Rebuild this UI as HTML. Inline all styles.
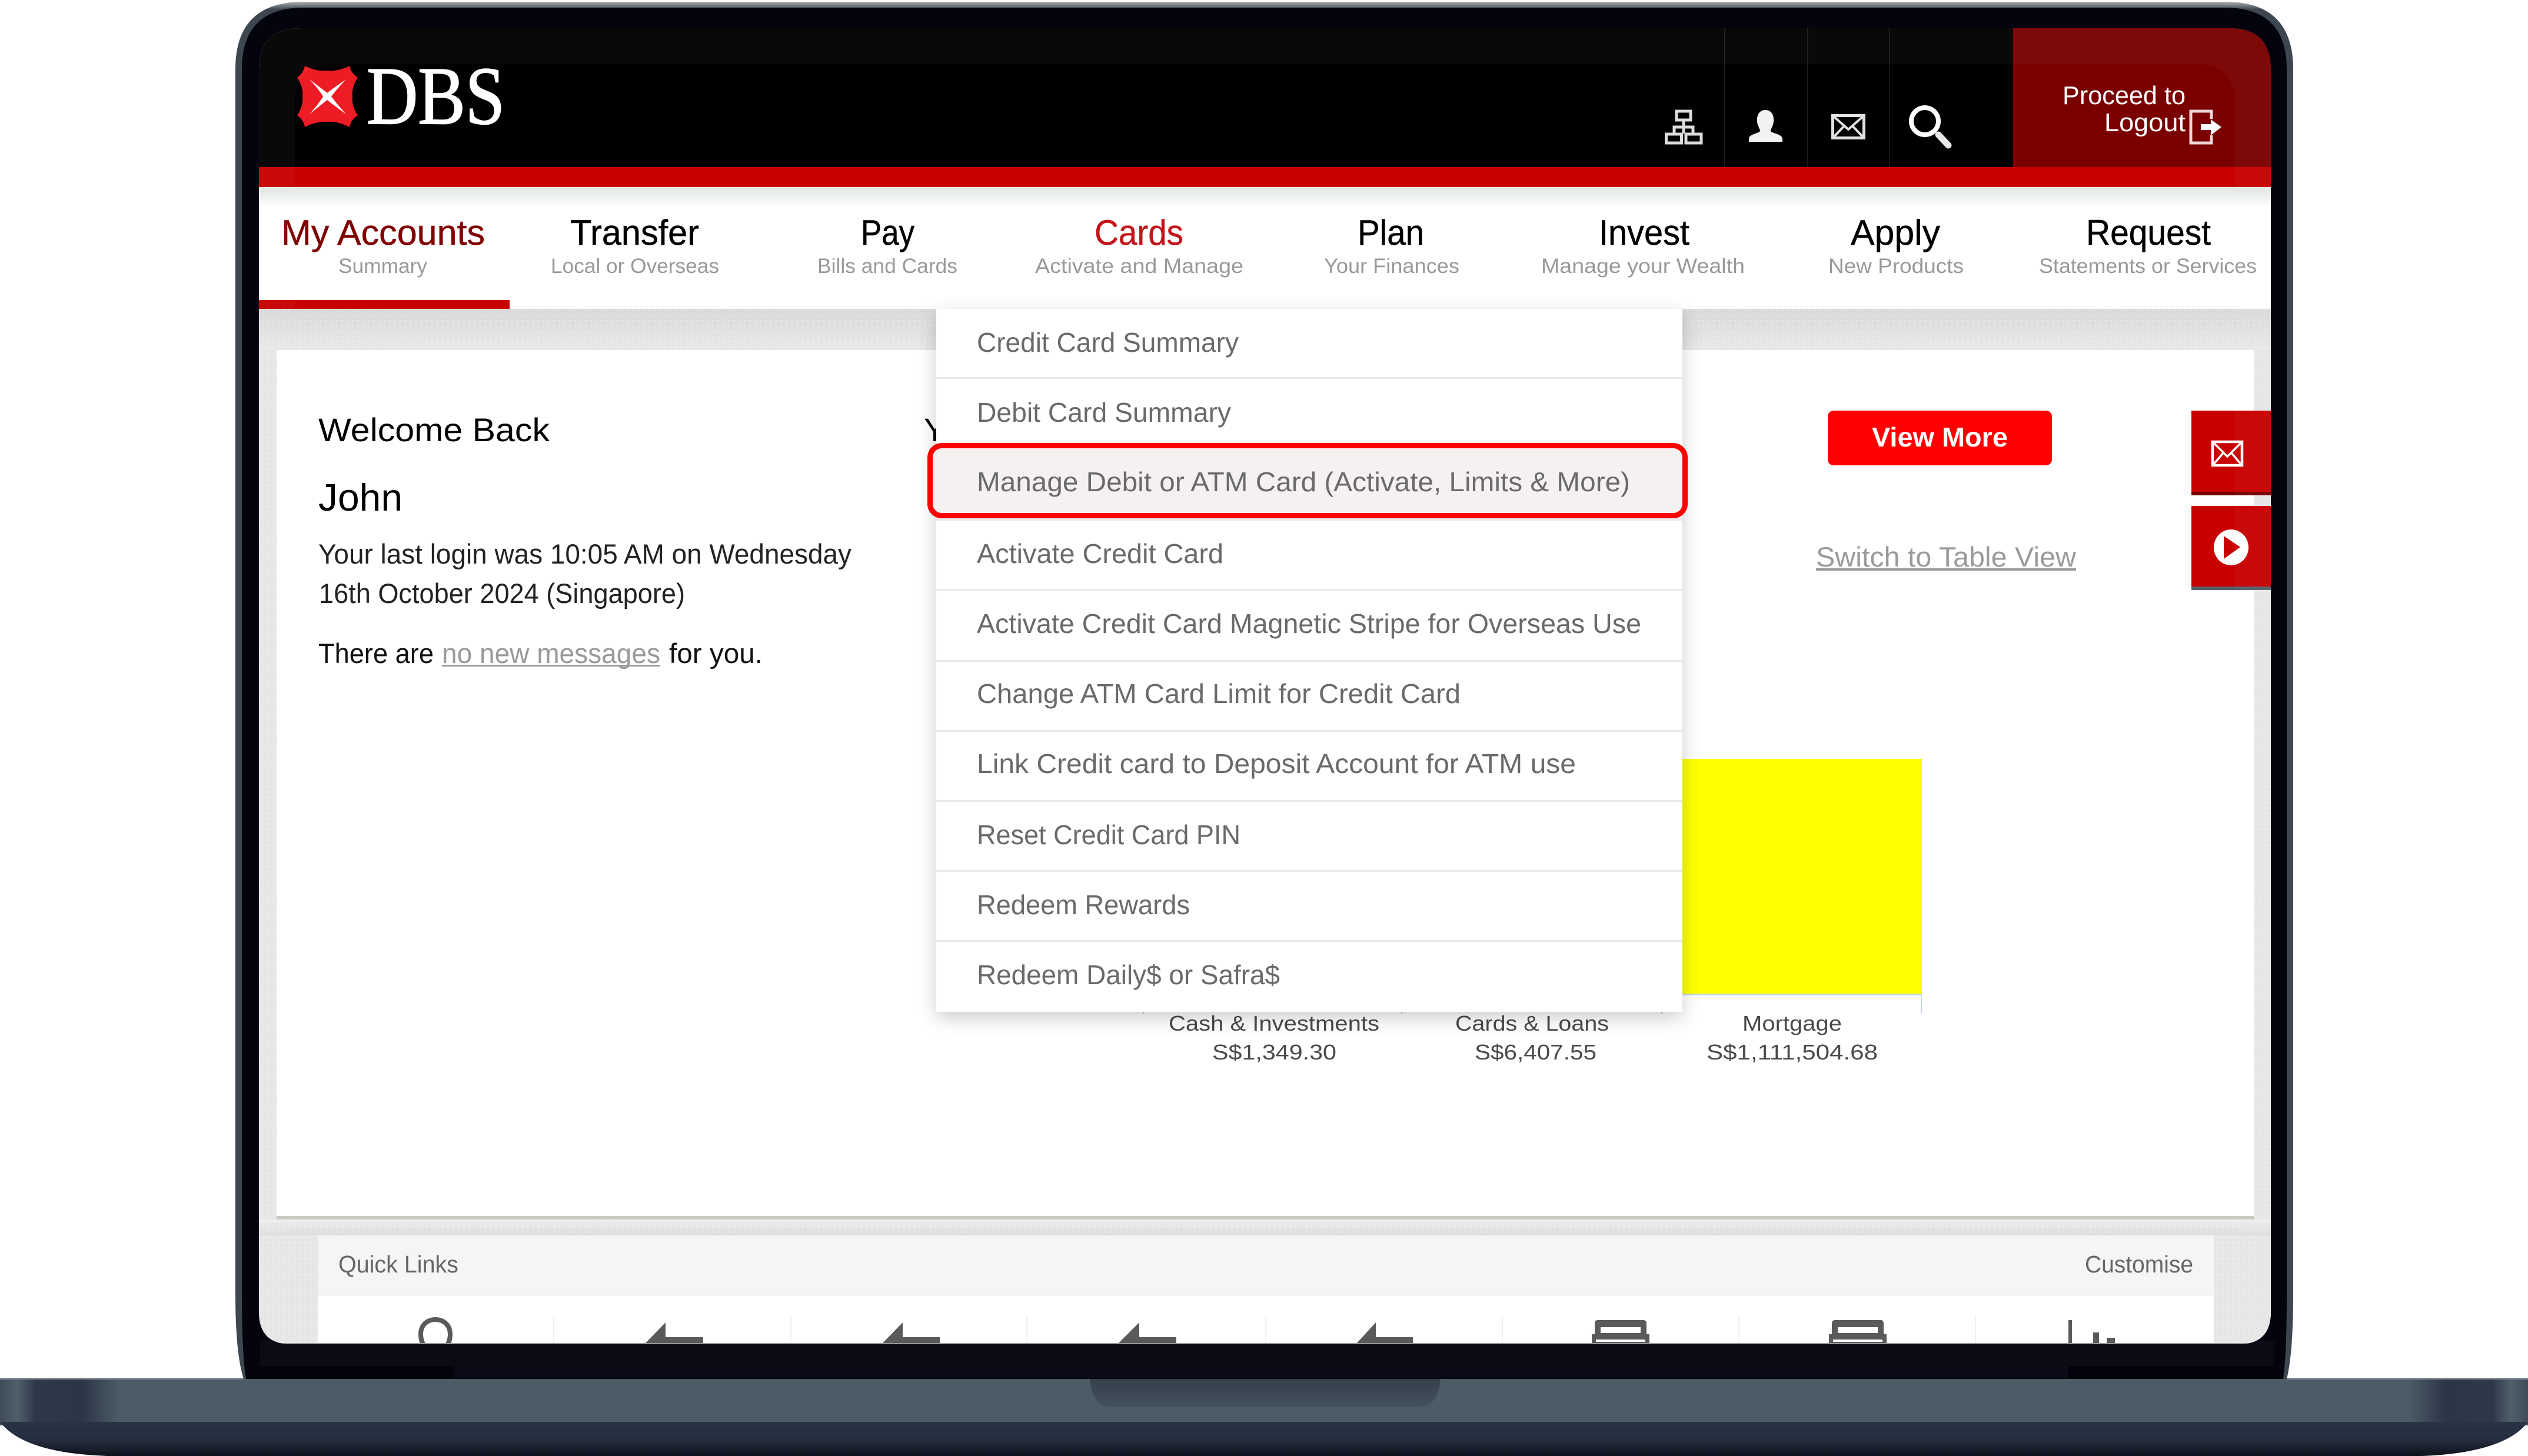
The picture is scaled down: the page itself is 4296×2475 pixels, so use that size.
<!DOCTYPE html>
<html lang="en">
<head>
<meta charset="utf-8">
<title>DBS digibank - Cards menu</title>
<style>
html,body{margin:0;padding:0;background:#fff;width:4296px;height:2475px;overflow:hidden}
svg{display:block}
text{font-family:"Liberation Sans",sans-serif}
.t{font-size:60px;fill:#000;stroke:currentColor;stroke-width:.5px}
.s{font-size:35px;fill:#999}
.d{font-size:46px;fill:#6a6a6a}
.b{font-size:47px;fill:#222}
.c{font-size:36px;fill:#4a4a4a}
</style>
</head>
<body>
<svg xmlns="http://www.w3.org/2000/svg" width="4296" height="2475" viewBox="0 0 4296 2475">
<defs>
<linearGradient id="edge" gradientUnits="userSpaceOnUse" x1="0" y1="2" x2="0" y2="16">
<stop offset="0" stop-color="#b5b8ba"/><stop offset="1" stop-color="#3e474f"/>
</linearGradient>
<linearGradient id="baseT" gradientUnits="userSpaceOnUse" x1="0" y1="0" x2="4296" y2="0">
<stop offset="0" stop-color="#3f4c58"/><stop offset=".007" stop-color="#4f5e6a"/>
<stop offset=".014" stop-color="#2e3849"/><stop offset=".033" stop-color="#2c3648"/>
<stop offset=".047" stop-color="#4c5b66"/><stop offset=".953" stop-color="#4c5b66"/>
<stop offset=".967" stop-color="#2c3648"/><stop offset=".986" stop-color="#2e3849"/>
<stop offset=".993" stop-color="#4f5e6a"/><stop offset="1" stop-color="#3f4c58"/>
</linearGradient>
<linearGradient id="baseB" gradientUnits="userSpaceOnUse" x1="0" y1="2423" x2="0" y2="2475">
<stop offset="0" stop-color="#2a3345"/><stop offset=".5" stop-color="#242c3d"/><stop offset="1" stop-color="#0e111d"/>
</linearGradient>
<linearGradient id="notch" gradientUnits="userSpaceOnUse" x1="0" y1="2343" x2="0" y2="2392">
<stop offset="0" stop-color="#333f4b"/><stop offset="1" stop-color="#44525d"/>
</linearGradient>
<linearGradient id="navsh" gradientUnits="userSpaceOnUse" x1="0" y1="318" x2="0" y2="352">
<stop offset="0" stop-color="#dfe4e2"/><stop offset="1" stop-color="#fff"/>
</linearGradient>
<linearGradient id="grayTop" gradientUnits="userSpaceOnUse" x1="0" y1="525" x2="0" y2="595">
<stop offset="0" stop-color="#d8d8d8"/><stop offset="1" stop-color="#e9e9e9"/>
</linearGradient>
<linearGradient id="grayMid" gradientUnits="userSpaceOnUse" x1="0" y1="2073" x2="0" y2="2100">
<stop offset="0" stop-color="#efefef"/><stop offset="1" stop-color="#dcdcdc"/>
</linearGradient>
<pattern id="dots" width="9" height="9" patternUnits="userSpaceOnUse">
<rect x="0" y="0" width="3" height="3" fill="#dcdcdc" opacity=".35"/>
<rect x="4" y="4" width="3" height="3" fill="#f4f4f4" opacity=".35"/>
</pattern>
<clipPath id="screen">
<path d="M440 118 Q440 48 510 48 H3789 Q3859 48 3859 118 V2230 Q3859 2285 3804 2285 H495 Q440 2285 440 2230 Z"/>
</clipPath>
<filter id="blur" x="-10%" y="-10%" width="120%" height="120%"><feGaussianBlur stdDeviation="16"/></filter>
</defs>

<!-- laptop base -->
<path d="M0 2343 H4296 V2423 H0 Z" fill="url(#baseT)"/>
<path d="M0 2417 H4296 Q4256 2470 4114 2475 H182 Q40 2470 0 2417 Z" fill="url(#baseB)"/>
<path d="M1852 2343 H2448 Q2444 2392 2412 2392 H1888 Q1856 2392 1852 2343 Z" fill="url(#notch)"/>
<rect x="0" y="2342" width="414" height="3" fill="#7d8891"/>
<rect x="3886" y="2342" width="410" height="3" fill="#7d8891"/>

<!-- lid -->
<path d="M414 2344 Q400 2300 400 2200 V118 Q400 3 515 3 H3782 Q3897 3 3897 118 V2200 Q3897 2300 3886 2344 Z" fill="url(#edge)"/>
<path d="M418 2344 Q411 2300 411 2200 V118 Q411 13 516 13 H3781 Q3886 13 3886 118 V2200 Q3886 2300 3880 2344 Z" fill="#03040e"/>
<rect x="442" y="2280" width="3423" height="42" fill="#0a0b15"/>
<rect x="772" y="2322" width="2742" height="21" fill="#0b0c18"/>

<!-- screen -->
<g clip-path="url(#screen)">
<rect x="440" y="48" width="3420" height="2240" fill="#fff"/>

<!-- header -->
<rect x="440" y="48" width="3420" height="236" fill="#000"/>
<rect x="3421" y="48" width="439" height="236" fill="#7a0000"/>
<rect x="440" y="284" width="3420" height="34" fill="#c80000"/>
<rect x="2930" y="48" width="1.5" height="236" fill="#1c1c1c"/>
<rect x="3071" y="48" width="1.5" height="236" fill="#1c1c1c"/>
<rect x="3210" y="48" width="1.5" height="236" fill="#1c1c1c"/>

<!-- logo -->
<path d="M518 112 Q538 122 556 120 Q574 122 594 112 Q596 124 608 132 Q597 148 599 164 Q597 180 608 196 Q596 204 594 216 Q574 206 556 207 Q538 206 518 216 Q516 204 505 196 Q516 180 514 164 Q516 148 505 132 Q516 124 518 112 Z" fill="#ed1c24"/>
<path d="M526 135 Q546 150 556 158 Q566 150 588 135 Q572 152 563 164 Q572 176 588 194 Q566 178 556 170 Q546 178 526 194 Q542 176 549 164 Q542 152 526 135 Z" fill="#fff"/>
<text x="623" y="210" font-size="140" textLength="235" lengthAdjust="spacingAndGlyphs" fill="#fff" stroke="#fff" stroke-width="2" style="font-family:'Liberation Serif',serif">DBS</text>

<!-- header icons -->
<g fill="none" stroke="#dcdcdc" stroke-width="5">
<rect x="2849" y="189" width="24" height="15"/>
<path d="M2861 204 V227 M2845 227 V216 H2877 V227"/>
<rect x="2831.500" y="228" width="26" height="15"/>
<rect x="2865" y="228" width="26" height="15"/>
</g>
<path d="M3000 187 C3011 187 3015 197 3014 207 C3013 215 3009 219 3009 223 C3012 227 3029 228 3029 236 V241 H2972 V236 C2972 228 2988 227 2991 223 C2991 219 2987 215 2986 207 C2985 197 2989 187 3000 187 Z" fill="#f2f2f2"/>
<g fill="none" stroke="#e2e2e2" stroke-width="5">
<rect x="3114.500" y="196.500" width="53" height="38"/>
<path d="M3115 197 L3141 220 L3167 197 M3115 234 L3134 214 M3167 234 L3148 214" stroke-width="4"/>
</g>
<circle cx="3271" cy="206" r="23" fill="none" stroke="#fff" stroke-width="8"/>
<path d="M3294 229 L3311 247" stroke="#e8e8e8" stroke-width="11" stroke-linecap="round" fill="none"/>

<text x="3505" y="177" font-size="44" textLength="209" lengthAdjust="spacingAndGlyphs" fill="#fff">Proceed to</text>
<text x="3576" y="223" font-size="44" textLength="138" lengthAdjust="spacingAndGlyphs" fill="#fff">Logout</text>
<path d="M3758 202 V189 H3723 V243 H3758 V230" fill="none" stroke="#ecd6d6" stroke-width="5"/>
<path d="M3740 211 H3757 V203 L3775 216 L3757 230 V221 H3740 Z" fill="#fff"/>

<!-- nav -->
<rect x="440" y="318" width="3420" height="34" fill="url(#navsh)"/>
<text class="t" x="478" y="416" textLength="346" lengthAdjust="spacingAndGlyphs" style="fill:#800000;color:#800000">My Accounts</text>
<text class="t" x="969" y="416" textLength="219" lengthAdjust="spacingAndGlyphs">Transfer</text>
<text class="t" x="1463" y="416" textLength="91" lengthAdjust="spacingAndGlyphs">Pay</text>
<text class="t" x="1860" y="416" textLength="151" lengthAdjust="spacingAndGlyphs" style="fill:#c4151c;color:#c4151c">Cards</text>
<text class="t" x="2307" y="416" textLength="113" lengthAdjust="spacingAndGlyphs">Plan</text>
<text class="t" x="2717" y="416" textLength="154" lengthAdjust="spacingAndGlyphs">Invest</text>
<text class="t" x="3145" y="416" textLength="152" lengthAdjust="spacingAndGlyphs">Apply</text>
<text class="t" x="3545" y="416" textLength="212" lengthAdjust="spacingAndGlyphs">Request</text>
<text class="s" x="575" y="464" textLength="151" lengthAdjust="spacingAndGlyphs">Summary</text>
<text class="s" x="936" y="464" textLength="286" lengthAdjust="spacingAndGlyphs">Local or Overseas</text>
<text class="s" x="1389" y="464" textLength="238" lengthAdjust="spacingAndGlyphs">Bills and Cards</text>
<text class="s" x="1759" y="464" textLength="354" lengthAdjust="spacingAndGlyphs">Activate and Manage</text>
<text class="s" x="2250" y="464" textLength="230" lengthAdjust="spacingAndGlyphs">Your Finances</text>
<text class="s" x="2619" y="464" textLength="346" lengthAdjust="spacingAndGlyphs">Manage your Wealth</text>
<text class="s" x="3107" y="464" textLength="230" lengthAdjust="spacingAndGlyphs">New Products</text>
<text class="s" x="3465" y="464" textLength="370" lengthAdjust="spacingAndGlyphs">Statements or Services</text>
<rect x="440" y="510" width="426" height="15" fill="#c80000"/>

<!-- gray page background -->
<rect x="440" y="525" width="3420" height="1760" fill="#e7e7e7"/>
<rect x="440" y="525" width="3420" height="70" fill="url(#grayTop)"/>
<rect x="440" y="2073" width="3420" height="27" fill="url(#grayMid)"/>
<rect x="440" y="525" width="3420" height="1760" fill="url(#dots)"/>

<!-- main card -->
<rect x="470" y="595" width="3360" height="1472" fill="#fff"/>
<rect x="470" y="2067" width="3360" height="6" fill="#cdcac3"/>

<text x="541" y="750" font-size="56" textLength="393" lengthAdjust="spacingAndGlyphs" fill="#000">Welcome Back</text>
<text x="541" y="868" font-size="65" textLength="143" lengthAdjust="spacingAndGlyphs" fill="#000">John</text>
<text class="b" x="541" y="958" textLength="906" lengthAdjust="spacingAndGlyphs">Your last login was 10:05 AM on Wednesday</text>
<text class="b" x="542" y="1025" textLength="622" lengthAdjust="spacingAndGlyphs">16th October 2024 (Singapore)</text>
<text class="b" x="541" y="1127" textLength="196" lengthAdjust="spacingAndGlyphs" style="fill:#111">There are</text>
<text class="b" x="751" y="1127" textLength="371" lengthAdjust="spacingAndGlyphs" style="fill:#9a9a9a">no new messages</text>
<rect x="751" y="1130" width="371" height="3" fill="#9a9a9a"/>
<text class="b" x="1137" y="1127" textLength="159" lengthAdjust="spacingAndGlyphs" style="fill:#111">for you.</text>
<text x="1570" y="750" font-size="56" fill="#000">Your</text>

<!-- view more -->
<rect x="3106" y="698" width="381" height="93" rx="10" fill="#f00"/>
<text x="3181" y="759" font-size="46" font-weight="700" textLength="231" lengthAdjust="spacingAndGlyphs" fill="#fff">View More</text>
<text x="3086" y="963" font-size="47" textLength="442" lengthAdjust="spacingAndGlyphs" fill="#9a9a9a">Switch to Table View</text>
<rect x="3086" y="966" width="442" height="4" fill="#9a9a9a"/>

<!-- side buttons -->
<rect x="3724" y="698" width="136" height="144" fill="#c80000"/>
<rect x="3724" y="836" width="136" height="6" fill="#720000"/>
<rect x="3724" y="860" width="136" height="143" fill="#c80000"/>
<rect x="3724" y="997" width="136" height="6" fill="#55606a"/>
<g fill="none" stroke="#fff">
<rect x="3760" y="751" width="50" height="40" stroke-width="4.500"/>
<path d="M3761 752 L3785 776 L3809 752 M3761 790 L3778 770 M3809 790 L3792 770" stroke-width="3.500"/>
</g>
<ellipse cx="3791.500" cy="930.500" rx="29.500" ry="30.500" fill="#fff"/>
<path d="M3779 911 L3807 930 L3779 950 Z" fill="#c80000"/>

<!-- chart -->
<rect x="2700" y="1290" width="566" height="399" fill="#ff0"/>
<rect x="2700" y="1689" width="566" height="3" fill="#c6d3e3"/>
<rect x="3264" y="1689" width="2" height="34" fill="#c6d3e3"/>
<rect x="1942" y="1718" width="2" height="6" fill="#c6d3e3"/>
<rect x="2381" y="1718" width="2" height="6" fill="#c6d3e3"/>
<rect x="2823" y="1718" width="2" height="6" fill="#c6d3e3"/>
<text class="c" x="1986" y="1752" textLength="358" lengthAdjust="spacingAndGlyphs">Cash &amp; Investments</text>
<text class="c" x="2060" y="1801" textLength="211" lengthAdjust="spacingAndGlyphs">S$1,349.30</text>
<text class="c" x="2473" y="1752" textLength="261" lengthAdjust="spacingAndGlyphs">Cards &amp; Loans</text>
<text class="c" x="2506" y="1801" textLength="207" lengthAdjust="spacingAndGlyphs">S$6,407.55</text>
<text class="c" x="2961" y="1752" textLength="169" lengthAdjust="spacingAndGlyphs">Mortgage</text>
<text class="c" x="2900" y="1801" textLength="291" lengthAdjust="spacingAndGlyphs">S$1,111,504.68</text>

<!-- dropdown -->
<rect x="1591" y="535" width="1268" height="1195" fill="#000" opacity=".2" filter="url(#blur)"/>
<rect x="1591" y="525" width="1268" height="1195" fill="#fff"/>
<g fill="#e9e9e9">
<rect x="1591" y="641" width="1268" height="3"/>
<rect x="1591" y="881" width="1268" height="4"/>
<rect x="1591" y="1001" width="1268" height="3"/>
<rect x="1591" y="1122" width="1268" height="3"/>
<rect x="1591" y="1241" width="1268" height="3"/>
<rect x="1591" y="1360" width="1268" height="3"/>
<rect x="1591" y="1479" width="1268" height="3"/>
<rect x="1591" y="1598" width="1268" height="3"/>
</g>
<rect x="1580.500" y="757.500" width="1283" height="119" rx="20" fill="#f5f1f0" stroke="#f00" stroke-width="9"/>
<text class="d" x="1660" y="598" textLength="445" lengthAdjust="spacingAndGlyphs">Credit Card Summary</text>
<text class="d" x="1660" y="717" textLength="432" lengthAdjust="spacingAndGlyphs">Debit Card Summary</text>
<text class="d" x="1660" y="835" textLength="1110" lengthAdjust="spacingAndGlyphs">Manage Debit or ATM Card (Activate, Limits &amp; More)</text>
<text class="d" x="1660" y="957" textLength="419" lengthAdjust="spacingAndGlyphs">Activate Credit Card</text>
<text class="d" x="1660" y="1076" textLength="1129" lengthAdjust="spacingAndGlyphs">Activate Credit Card Magnetic Stripe for Overseas Use</text>
<text class="d" x="1660" y="1195" textLength="822" lengthAdjust="spacingAndGlyphs">Change ATM Card Limit for Credit Card</text>
<text class="d" x="1660" y="1314" textLength="1018" lengthAdjust="spacingAndGlyphs">Link Credit card to Deposit Account for ATM use</text>
<text class="d" x="1660" y="1435" textLength="448" lengthAdjust="spacingAndGlyphs">Reset Credit Card PIN</text>
<text class="d" x="1660" y="1554" textLength="362" lengthAdjust="spacingAndGlyphs">Redeem Rewards</text>
<text class="d" x="1660" y="1673" textLength="515" lengthAdjust="spacingAndGlyphs">Redeem Daily$ or Safra$</text>

<!-- quick links -->
<rect x="540" y="2100" width="3222" height="103" fill="#f5f5f5"/>
<rect x="540" y="2203" width="3222" height="82" fill="#fff"/>
<text x="575" y="2163" font-size="41" textLength="204" lengthAdjust="spacingAndGlyphs" fill="#666">Quick Links</text>
<text x="3543" y="2163" font-size="41" textLength="184" lengthAdjust="spacingAndGlyphs" fill="#666">Customise</text>
<g fill="#f0f0f0">
<rect x="940" y="2237" width="2" height="48"/><rect x="1343" y="2237" width="2" height="48"/>
<rect x="1744" y="2237" width="2" height="48"/><rect x="2150" y="2237" width="2" height="48"/>
<rect x="2552" y="2237" width="2" height="48"/><rect x="2954" y="2237" width="2" height="48"/>
<rect x="3356" y="2237" width="2" height="48"/>
</g>
<g fill="#5a5a5a">
<path d="M740 2239 C756 2239 769 2250 769 2268 C769 2276 767 2282 765 2286 H756 C759 2280 761 2274 761 2268 C761 2255 752 2247 740 2247 C728 2247 719 2255 719 2268 C719 2274 721 2280 724 2286 H715 C713 2282 711 2276 711 2268 C711 2250 724 2239 740 2239 Z"/>
<path d="M1131 2248 V2273 H1195 V2286 H1094 Z"/>
<path d="M1534 2248 V2273 H1597 V2286 H1497 Z"/>
<path d="M1936 2248 V2273 H1999 V2286 H1898 Z"/>
<path d="M2338 2248 V2273 H2401 V2286 H2303 Z"/>
<path d="M2715 2244 H2793 Q2798 2244 2798 2250 V2268 H2803 V2286 H2705 V2268 H2710 V2250 Q2710 2244 2715 2244 Z M2720 2256 V2266 H2788 V2256 Z M2712 2277 V2281 H2796 V2277 Z" fill-rule="evenodd"/>
<path d="M3118 2244 H3196 Q3201 2244 3201 2250 V2268 H3206 V2286 H3108 V2268 H3113 V2250 Q3113 2244 3118 2244 Z M3123 2256 V2266 H3191 V2256 Z M3115 2277 V2281 H3199 V2277 Z" fill-rule="evenodd"/>
<rect x="3515" y="2244" width="6" height="42"/>
<rect x="3557" y="2265" width="10" height="21"/>
<rect x="3580" y="2274" width="14" height="12"/>
</g>
<rect x="440" y="2283" width="3420" height="2" fill="#9a9a9a"/>

<!-- bezel gloss -->
<path d="M440 48 H3860 V2285 H3798 V175 Q3798 109 3732 109 H567 Q501 109 501 175 V2285 H440 Z" fill="#fff" opacity=".035"/>
</g>
</svg>
</body>
</html>
